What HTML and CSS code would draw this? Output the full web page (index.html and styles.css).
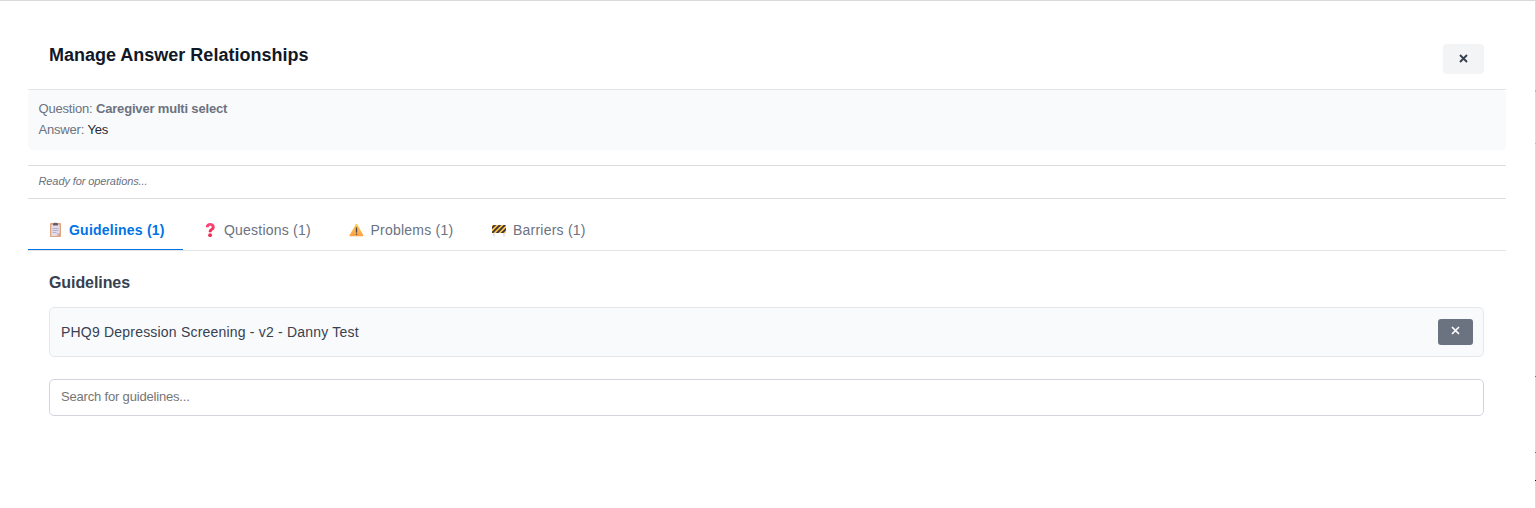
FILE: index.html
```html
<!DOCTYPE html>
<html lang="en">
<head>
<meta charset="utf-8">
<title>Manage Answer Relationships</title>
<link rel="stylesheet" href="styles.css">
</head>
<body>
<main class="dialog">
  <header class="header">
    <h1 class="title">Manage Answer Relationships</h1>
    <button class="close" aria-label="Close"><svg width="9" height="9" viewBox="0 0 9 9"><path d="M1 1 8 8M8 1 1 8" stroke="#374151" stroke-width="1.900" fill="none"/></svg></button>
  </header>
  <section class="context">
    <div class="line question">Question: <strong>Caregiver multi select</strong></div>
    <div class="line answer">Answer: <span class="value">Yes</span></div>
  </section>
  <div class="status"><span class="status-text">Ready for operations...</span></div>
  <nav class="tabs">
    <button class="tab active">
      <svg class="icon" width="14" height="16" viewBox="0 0 14 16"><rect x="2" y="1" width="11" height="14" rx=".8" fill="#dfa581"/><path d="M3.300 2.800h8.400v8L8.900 14H3.300z" fill="#e3dcea"/><path d="M8.900 14v-3h2.800z" fill="#c9badb"/><path d="M5 1.300h1.300V.8h2.400v.5H10v2.300H5z" fill="#665c70"/><path d="M4.500 6.500h6M4.500 8.500h6M4.500 10.500h4" stroke="#b3a8c2" stroke-width=".9"/></svg>
      <span>Guidelines (1)</span>
    </button>
    <button class="tab tab-questions">
      <svg class="icon" width="14" height="16" viewBox="0 0 14 16"><defs><linearGradient id="q" x1="0" y1="0" x2="0" y2="1"><stop offset="0" stop-color="#ff4b7d"/><stop offset="1" stop-color="#ec2650"/></linearGradient></defs><path d="M2.800 5.200C2.800 2.700 4.400 1 7.200 1c2.700 0 4.500 1.600 4.500 3.900 0 1.800-.9 2.800-2.300 3.600-.7.400-.8.800-.8 1.800H5.700c0-2 .5-3 1.900-3.900.8-.5 1.100-.8 1.100-1.500s-.5-1.200-1.400-1.200c-1 0-1.500.5-1.600 1.500z" fill="url(#q)"/><circle cx="7.100" cy="13.200" r="1.900" fill="#ee2b57"/></svg>
      <span>Questions (1)</span>
    </button>
    <button class="tab tab-problems">
      <svg class="icon" width="16" height="16" viewBox="0 0 16 16"><defs><linearGradient id="w" x1="0" y1="0" x2="0" y2="1"><stop offset="0" stop-color="#ffcc58"/><stop offset="1" stop-color="#fba044"/></linearGradient></defs><path d="M7.800 2.200q.7-.9 1.400 0l6.100 11q.4 1.100-.7 1.100H2.100q-1 0-.6-1.100z" fill="url(#w)"/><path d="M8.500 5.400v5.200" stroke="#47414d" stroke-width="1.300"/><circle cx="8.500" cy="12.300" r=".75" fill="#47414d"/></svg>
      <span>Problems (1)</span>
    </button>
    <button class="tab tab-barriers">
      <svg class="icon" width="16" height="16" viewBox="0 0 16 16"><defs><clipPath id="b"><rect x="1" y="3" width="14" height="8" rx=".5"/></clipPath></defs><path d="M3 10v4.500M13 10v4.500" stroke="#cfc3d9" stroke-width="1"/><rect x="1" y="3" width="14" height="8" rx=".5" fill="#ffc83d"/><path d="M-3 10 5 2M0 12 10 2M5 12 15 2M10 12l8-8" stroke="#403347" stroke-width="1.900" clip-path="url(#b)"/></svg>
      <span>Barriers (1)</span>
    </button>
  </nav>
  <section class="panel">
    <h2 class="heading">Guidelines</h2>
    <div class="item">
      <span class="item-name">PHQ9 Depression Screening - v2 - Danny Test</span>
      <button class="remove" aria-label="Remove"><svg width="9" height="9" viewBox="0 0 9 9"><path d="M1 1 8 8M8 1 1 8" stroke="#fff" stroke-width="1.700" fill="none"/></svg></button>
    </div>
    <input class="search" type="text" placeholder="Search for guidelines...">
  </section>
</main>
<div class="backdrop-edge"></div>
</body>
</html>
```

FILE: styles.css
```css
* { box-sizing: border-box; }
body {
  margin: 0;
  height: 508px;
  overflow: hidden;
  display: flex;
  background: #fff;
  border-top: 1px solid #d9d9d9;
  font-family: "Liberation Sans", Arial, sans-serif;
}
button { border: 0; margin: 0; font: inherit; }
.dialog { flex: 1; padding: 0 29px 0 28px; }
.backdrop-edge {
  width: 1px;
  background:
    linear-gradient(#3b78d8, #3b78d8) 0 375px / 1px 1px no-repeat,
    linear-gradient(#3b78d8, #3b78d8) 0 451px / 1px 1px no-repeat,
    linear-gradient(#111, #111) 0 479px / 1px 1px no-repeat,
    linear-gradient(#b5b5b5, #b5b5b5) 0 89px / 1px 2px no-repeat,
    linear-gradient(#b5b5b5, #b5b5b5) 0 142px / 1px 1px no-repeat,
    #dadada;
}
.header {
  height: 89px;
  padding: 43px 22px 0 21px;
  border-bottom: 1px solid #e3e3e5;
  display: flex;
  justify-content: space-between;
  align-items: flex-start;
}
.title { margin: 0; font-size: 18px; line-height: 22px; color: #111827; }
.close {
  width: 41px;
  height: 30px;
  padding: 0 0 1px;
  border-radius: 4px;
  background: #f3f4f6;
  display: flex;
  align-items: center;
  justify-content: center;
}
.context {
  height: 60px;
  padding: 8px 10px 0 10.500px;
  border-radius: 5px;
  background: #f9fafb;
  color: #6b7280;
  font-size: 13px;
  line-height: 21px;
  letter-spacing: -.18px;
}
.value { color: #1f2937; }
.status {
  height: 34px;
  margin-top: 15px;
  padding: 8px 10px 8px 10.500px;
  border: solid #dedede;
  border-width: 1px 0;
  font-size: 11px;
  line-height: 15px;
  font-style: italic;
  color: #6b7280;
  letter-spacing: -.1px;
}
.tabs { height: 52px; padding-top: 11px; display: flex; border-bottom: 1px solid #e3e4e6; }
.tab {
  height: 40px;
  width: 155px;
  padding: 0 0 0 20px;
  background: none;
  border-bottom: 1px solid transparent;
  display: flex;
  align-items: center;
  gap: 7px;
  font-size: 14px;
  color: #6b7280;
  white-space: nowrap;
  letter-spacing: .22px;
}
.active { color: #0073e6; border-color: #0073e6; font-weight: bold; }
.tab-questions { width: 145px; }
.tab-problems { width: 143px; gap: 6.500px; }
.tab-barriers { width: 140px; gap: 6px; }
.icon { flex: none; }
.panel { padding: 21px 22px 0 21px; }
.heading { margin: 0; font-size: 16px; line-height: 22px; letter-spacing: -.08px; color: #374151; }
.item {
  height: 50px;
  margin-top: 13px;
  padding: 0 10px 0 11px;
  border: 1px solid #e5e7eb;
  border-radius: 5px;
  background: #f9fafb;
  display: flex;
  align-items: center;
  justify-content: space-between;
  font-size: 14px;
  letter-spacing: .2px;
  color: #374151;
}
.remove {
  width: 35px;
  height: 26px;
  padding: 0 0 3px;
  border-radius: 3px;
  background: #6b7280;
  display: flex;
  align-items: center;
  justify-content: center;
}
.search {
  display: block;
  width: 100%;
  height: 37px;
  margin-top: 22px;
  padding: 0 11px 2px;
  border: 1px solid #d1d5db;
  border-radius: 5px;
  font: 13px "Liberation Sans", Arial, sans-serif;
  letter-spacing: -.18px;
}
.search::placeholder { color: #757575; }
```
